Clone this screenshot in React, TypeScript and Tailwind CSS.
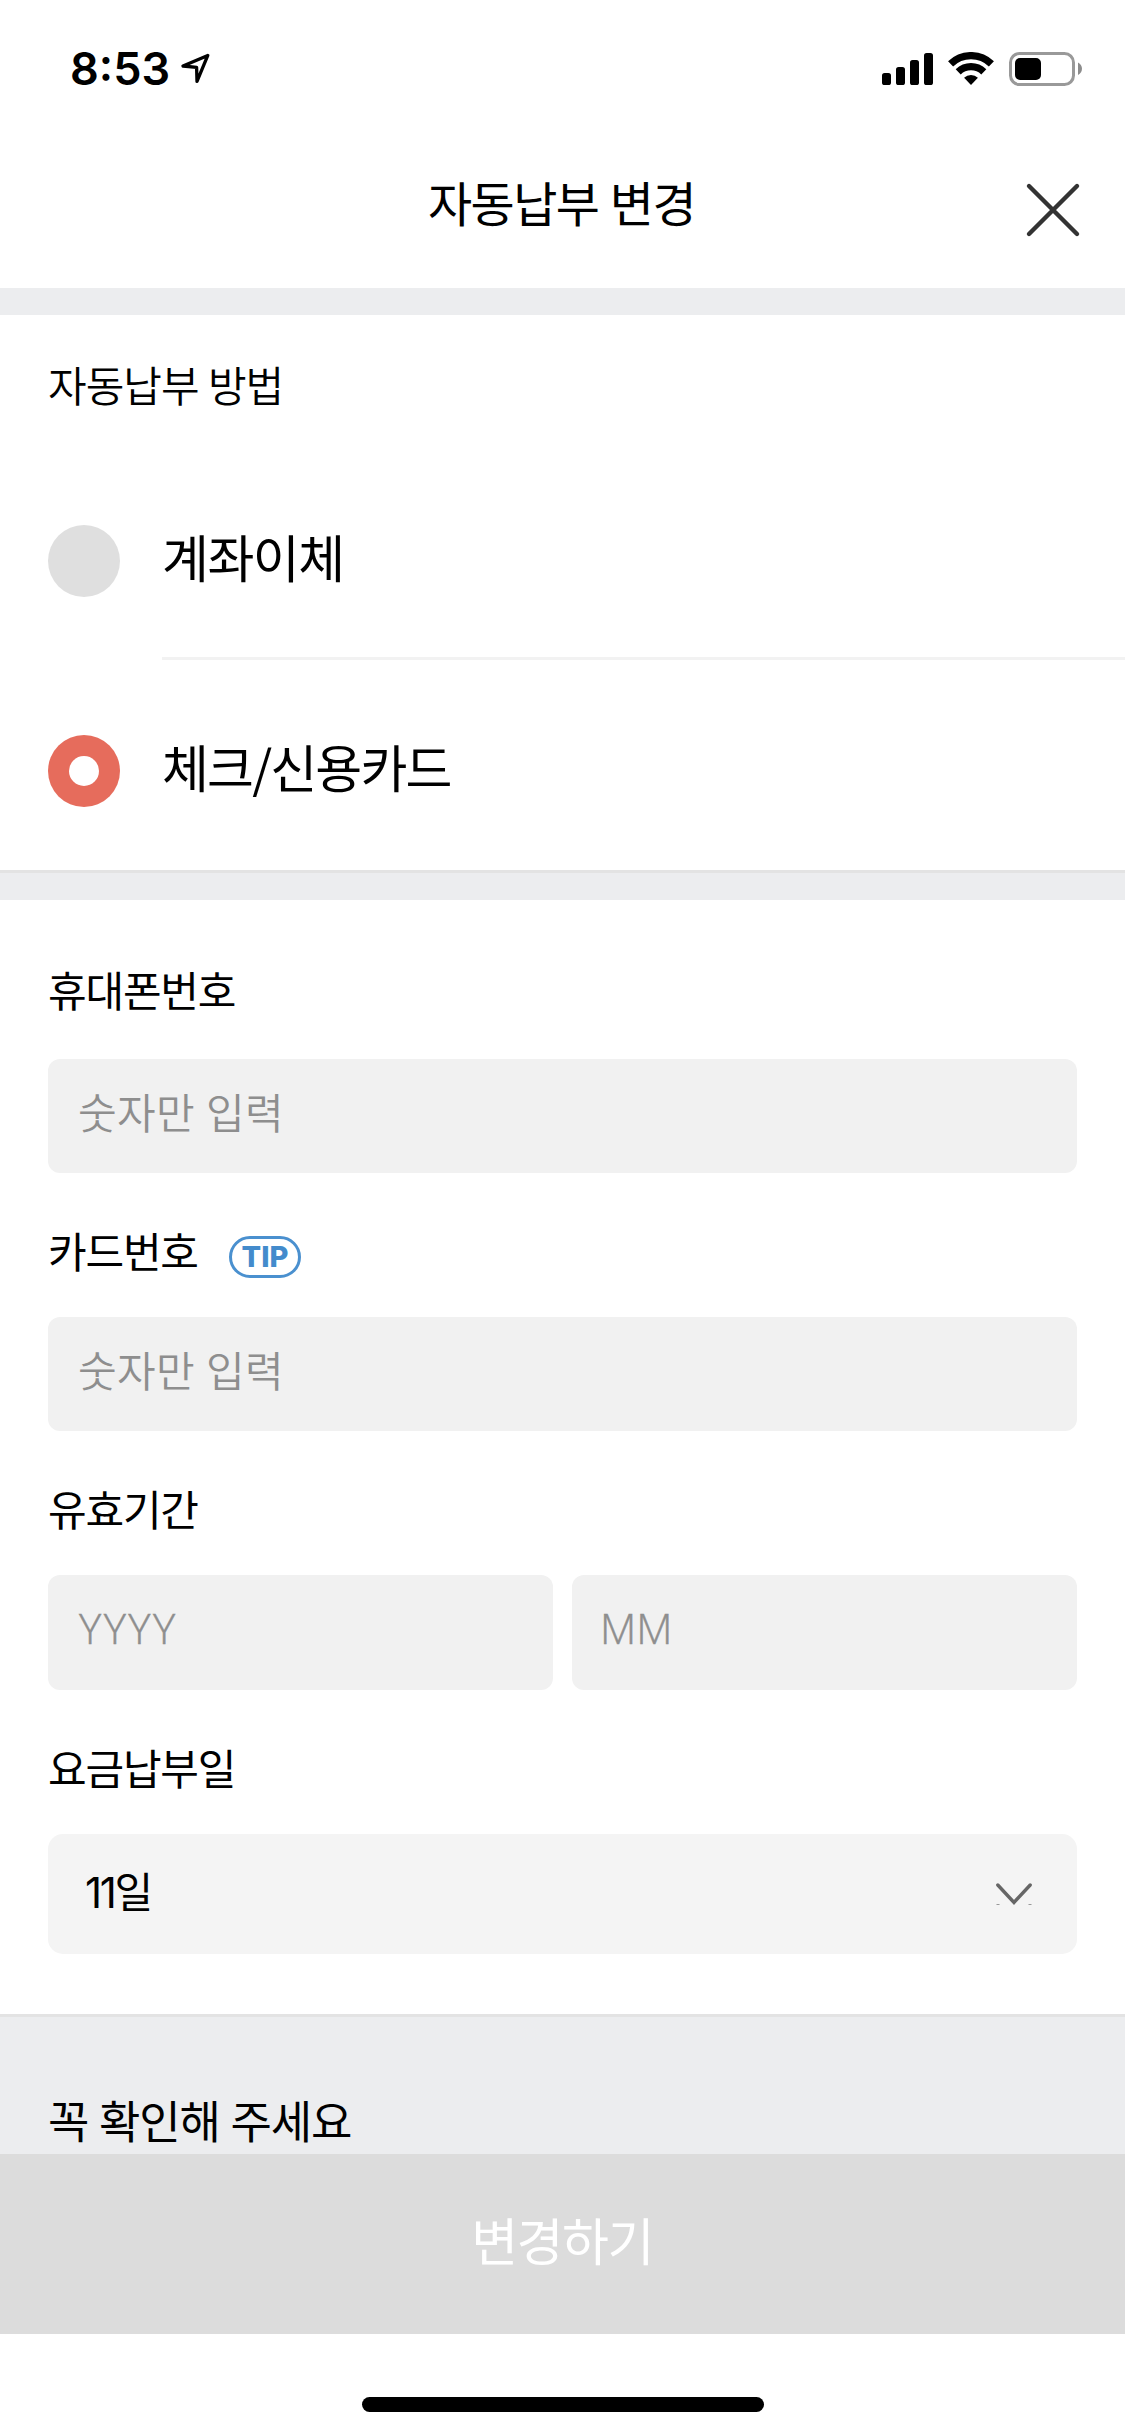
import type { ReactNode } from 'react';

function StatusBar() {
  return (
    <div className="flex h-[132px] items-start justify-between pt-[52px] pr-[43px] pl-[70px]">
      <div className="flex h-[34px] items-center">
        <span className="w-[110px] font-['Inter',sans-serif] text-[45px] leading-[34px] font-semibold">8:53</span>
        <svg width="32" height="34" viewBox="0 0 32 34" fill="none">
          <path d="M27.8 3.4 3 14 16.6 15.4 17 29.4Z" stroke="#000" strokeWidth="3.3" strokeLinejoin="round" />
        </svg>
      </div>
      <div className="flex h-[34px] items-center gap-[15px]">
        <svg width="51" height="34" viewBox="0 0 51 34">
          <rect x="0" y="21" width="9" height="12" rx="2.6" />
          <rect x="14" y="15" width="9" height="18" rx="2.6" />
          <rect x="28" y="8" width="9" height="25" rx="2.6" />
          <rect x="42" y="1" width="9" height="32" rx="2.6" />
        </svg>
        <svg width="46" height="34" viewBox="0 0 46 34" fill="none">
          <path d="M2.6 11.9A29.3 29.3 0 0 1 43.4 11.9" stroke="#000" strokeWidth="7.3" />
          <path d="M10.2 19.8A18.4 18.4 0 0 1 35.8 19.8" stroke="#000" strokeWidth="7.2" />
          <path d="M23 33 16.1 25.8A10 10 0 0 1 29.9 25.8Z" fill="#000" />
        </svg>
        <svg width="73" height="34" viewBox="0 0 73 34" fill="none">
          <rect x="1.5" y="1.5" width="63" height="31" rx="9" stroke="#999" strokeWidth="3" />
          <rect x="6" y="6" width="26" height="22" rx="5" fill="#000" />
          <path d="M69 10.5C71.7 12 73 14.3 73 16.8S71.7 21.5 69 23Z" fill="#8c8c8c" />
        </svg>
      </div>
    </div>
  );
}

function Header() {
  return (
    <header className="grid h-[156px] grid-cols-[1fr_auto_1fr] items-center">
      <span />
      <h1 className="pr-[2px] pb-[18px] text-[48px] leading-[60px] tracking-[-1.5px] [word-spacing:2px]">자동납부 변경</h1>
      <button className="mr-[44px] justify-self-end" aria-label="닫기">
        <svg width="56" height="56" viewBox="0 0 56 56" fill="none">
          <path d="M4 4 52 52M52 4 4 52" stroke="#333" strokeWidth="4.4" strokeLinecap="round" />
        </svg>
      </button>
    </header>
  );
}

function Radio({ checked }: { checked?: boolean }) {
  return checked ? (
    <div className="flex size-[72px] items-center justify-center rounded-full bg-[#e66c5c]">
      <div className="size-[30px] rounded-full bg-white" />
    </div>
  ) : (
    <div className="size-[72px] rounded-full bg-[#dfdfdf]" />
  );
}

function Label({ children }: { children: ReactNode }) {
  return <label className="block text-[42px] leading-[60px] tracking-[-1.2px]">{children}</label>;
}

function NumberInput() {
  return (
    <div className="flex h-[114px] items-center rounded-[12px] bg-[#f1f1f1] pb-[11px] pl-[30px] text-[42px] font-[350] tracking-[0.4px] text-[#8e8e8e] [word-spacing:1px]">
      숫자만 입력
    </div>
  );
}

export default function App() {
  return (
    <div className="flex h-[2436px] w-[1125px] flex-col overflow-hidden bg-white font-['Noto_Sans_CJK_KR',sans-serif] text-black">
      <StatusBar />
      <Header />
      <div className="h-[27px] bg-[#ecedef]" />

      <section className="border-b-[3px] border-[#e3e3e3]">
        <h2 className="h-[135px] pt-[39px] pl-[48px] text-[42px] leading-[60px] font-[350] tracking-[-1px] [word-spacing:1px]">
          자동납부 방법
        </h2>
        <div className="flex h-[210px] gap-[42px] pl-12">
          <div className="w-[72px] pt-[75px]">
            <Radio />
          </div>
          <div className="flex-1 border-b-[3px] border-[#f2f2f2] pt-[75px]">
            <div className="text-[51px] leading-[62px] tracking-[-1.5px]">계좌이체</div>
          </div>
        </div>
        <div className="flex h-[210px] gap-[42px] pl-12">
          <div className="w-[72px] pt-[75px]">
            <Radio checked />
          </div>
          <div className="flex-1 pt-[75px]">
            <div className="text-[51px] leading-[62px] tracking-[-1.85px]">체크/신용카드</div>
          </div>
        </div>
      </section>
      <div className="h-[27px] bg-[#ecedef]" />

      <section className="flex flex-col gap-[47px] border-b-[3px] border-[#e3e3e3] px-12 pt-[59px] pb-[60px]">
        <div className="flex flex-col gap-[40px]">
          <Label>휴대폰번호</Label>
          <NumberInput />
        </div>
        <div className="flex flex-col gap-[37px]">
          <div className="flex h-[60px] items-start">
            <div className="w-[181px]">
              <Label>카드번호</Label>
            </div>
            <span className="mt-[16px] flex h-[42px] w-[72px] items-center justify-center rounded-full border-[3px] border-[#4a90cf] pb-px font-['Inter',sans-serif] text-[29px] leading-none font-extrabold text-[#438bcc]">
              TIP
            </span>
          </div>
          <NumberInput />
        </div>
        <div className="flex flex-col gap-[37px]">
          <Label>유효기간</Label>
          <div className="grid grid-cols-2 gap-[19px] font-['Open_Sans',sans-serif] text-[42px] font-light text-[#8e8e8e] [-webkit-text-stroke:0.5px_#8e8e8e]">
            <div className="flex h-[115px] items-center rounded-[12px] bg-[#f1f1f1] pb-[10px] pl-[31px] tracking-[2.5px]">YYYY</div>
            <div className="flex h-[115px] items-center rounded-[12px] bg-[#f1f1f1] pb-[10px] pl-[28px]">MM</div>
          </div>
        </div>
        <div className="flex flex-col gap-[37px]">
          <Label>요금납부일</Label>
          <div className="flex h-[120px] items-center justify-between rounded-[15px] bg-[#f4f4f4] pr-[45px] pl-[37px]">
            <div className="pb-[6px] text-[42px] leading-[60px]">
              <span className="font-['Inter',sans-serif] tracking-[-2.4px]">11</span>
              <span>일</span>
            </div>
            <svg width="36" height="22" viewBox="0 0 36 22" fill="none">
              <path d="M1.8 2 18 19.4 34.2 2" stroke="#666" strokeWidth="3.4" strokeLinecap="round" />
              <path d="M.5 21.5H3.5M32.5 21.5H35.5" stroke="#999" />
            </svg>
          </div>
        </div>
      </section>

      <section className="h-[137px] bg-[#ecedef] pt-[73px] pl-[48px]">
        <h2 className="text-[45px] leading-[60px] tracking-[-1.2px] [word-spacing:2px]">꼭 확인해 주세요</h2>
      </section>

      <button className="flex h-[180px] items-center justify-center bg-[#dcdcdc] pr-px pb-[10px] text-[51px] tracking-[-1.5px] text-white">
        변경하기
      </button>
      <div className="mt-[63px] h-[15px] w-[402px] self-center rounded-full bg-black" />
    </div>
  );
}
